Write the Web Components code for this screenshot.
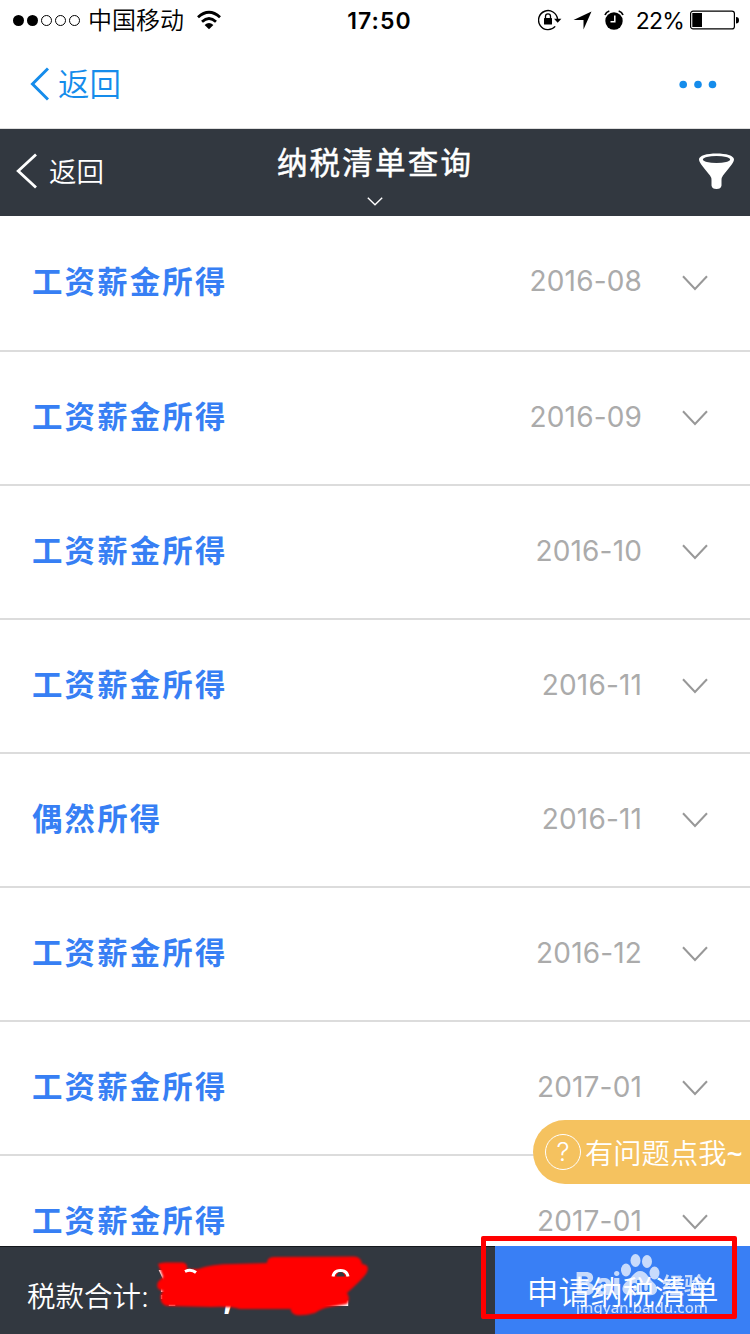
<!DOCTYPE html>
<html lang="zh-CN">
  <head>
    <meta charset="utf-8" />
    <meta name="viewport" content="width=device-width, initial-scale=1.0" />
    <title>纳税清单查询</title>
    <style>
      body {
        margin: 0;
        background: #fff;
        font-family: Inter, "Noto Sans CJK SC", sans-serif;
      }
    </style>
  </head>
  <body>
    <tax-app></tax-app>

    <script>
      function define(name, html) {
        const template = document.createElement("template");
        template.innerHTML = html;
        class Element extends HTMLElement {
          constructor() {
            super();
            this.attachShadow({ mode: "open" });
            this.shadowRoot.appendChild(template.content.cloneNode(true));
          }
        }
        window.customElements.define(name, Element);
      }

      define("status-bar", `
<style>
  :host { display: grid; grid-template-columns: 1fr auto 1fr; align-items: center; height: 40px; padding: 0 11px 0 13px; color: #000; }
  .side { display: flex; align-items: center; }
  .end { justify-content: flex-end; }
  .carrier { font-size: 24px; line-height: 36px; margin: 2px 12px 0 7px; font-weight: 350; }
  .time { font-size: 23px; font-weight: 600; letter-spacing: 1.1px; line-height: 36px; margin: 2px 0 0 7px; }
  .percent { font-size: 23px; letter-spacing: -0.8px; line-height: 36px; margin: 2px 6px 0 12px; }
  svg { display: block; flex: none; }
</style>
<div class="side">
  <svg width="68" height="14" viewBox="0 0 68 14">
    <circle cx="5.5" cy="7.5" r="5.5" /><circle cx="19.5" cy="7.5" r="5.5" />
    <g fill="none" stroke="#000"><circle cx="33.5" cy="7.5" r="5" /><circle cx="47.5" cy="7.5" r="5" /><circle cx="61.5" cy="7.5" r="5" /></g>
  </svg>
  <span class="carrier">中国移动</span>
  <svg width="26" height="20" viewBox="0 0 26 20">
    <path d="M2 7.2Q13-2.8 24 7.2M6 11.7Q13 5.3 20 11.7" fill="none" stroke="#000" stroke-width="2.8" />
    <path d="M8.6 15Q13 11 17.4 15L13 19.2Z" />
  </svg>
</div>
<span class="time">17:50</span>
<div class="side end">
  <svg width="24" height="22" viewBox="0 0 24 22">
    <path d="M17.2 17.4A9.5 9.5 0 1 1 19.5 10" fill="none" stroke="#000" stroke-width="1.4" />
    <path d="M16 9.7h7.4L19.7 13.8Z" /><rect x="6" y="9" width="8" height="6.6" rx=".5" />
    <path d="M7.5 9.5V7.3a2.5 2.5 0 0 1 5 0v2.2" fill="none" stroke="#000" stroke-width="1.3" />
  </svg>
  <svg width="19" height="19" viewBox="0 0 19 19" style="margin-left:11px"><path d="M18.5.5L10.5 18.5V8.9H.5Z" /></svg>
  <svg width="20" height="22" viewBox="0 0 20 22" style="margin-left:12px">
    <circle cx="10" cy="12" r="8.7" /><path d="M1 6Q2 3 5.3 2M14.7 2Q18 3 19 6" fill="none" stroke="#000" stroke-width="1.7" />
    <path d="M10.8 6.5v6.2H6.5" fill="none" stroke="#fff" stroke-width="1.5" />
  </svg>
  <span class="percent">22%</span>
  <svg width="49" height="20" viewBox="0 0 49 20">
    <rect x=".6" y="1.1" width="43.8" height="17.8" rx="2.5" fill="none" stroke="#000" stroke-width="1.2" />
    <path d="M2.3 3h9.7v14H2.3zM46 7q3 0 3 3.2t-3 3.2z" />
  </svg>
</div>
`);

      define("web-nav", `
<style>
  :host { display: flex; align-items: center; justify-content: space-between; box-sizing: border-box; height: 89px; padding: 0 33px 0 30px; color: #158ceb; border-bottom: 1px solid #dedede; }
  .back { display: flex; align-items: center; gap: 9px; font-size: 31.5px; font-weight: 350; line-height: 60px; }
  .back span { margin-top: 2px; }
  svg { display: block; }
</style>
<div class="back">
  <svg width="19" height="34" viewBox="0 0 19 34"><path d="M18 1.5L2.5 17L18 32.5" fill="none" stroke="currentColor" stroke-width="3" /></svg>
  <span>返回</span>
</div>
<svg width="38" height="9" viewBox="0 0 38 9" fill="currentColor"><circle cx="4.2" cy="4.5" r="3.8" /><circle cx="19" cy="4.5" r="3.8" /><circle cx="33.5" cy="4.5" r="3.8" /></svg>
`);

      define("page-header", `
<style>
  :host { display: grid; grid-template-columns: 1fr auto 1fr; box-sizing: border-box; height: 87px; padding: 0 16px; color: #fff; background: #323840; }
  .back { display: flex; align-items: center; gap: 11px; font-size: 27.5px; font-weight: 350; line-height: 60px; margin-bottom: 3px; }
  .back span { margin-top: 2px; }
  .title { display: flex; flex-direction: column; align-items: center; font-size: 30.5px; font-weight: 400; letter-spacing: 2.2px; -webkit-text-stroke: 0.5px #fff; }
  .title span { line-height: 68px; }
  .filter { justify-self: end; margin-top: 24px; }
  svg { display: block; }
</style>
<div class="back">
  <svg width="22" height="36" viewBox="0 0 22 36"><path d="M20 1.5L2.2 18L20 34.5" fill="none" stroke="#fff" stroke-width="2.8" /></svg>
  <span>返回</span>
</div>
<div class="title">
  <span><slot></slot></span>
  <svg width="16" height="9" viewBox="0 0 16 9"><path d="M.8.8L8 7.8L15.2.8" fill="none" stroke="#fff" stroke-width="1.4" /></svg>
</div>
<svg class="filter" width="35" height="36" viewBox="0 0 35 36">
  <path d="M0 6.5C0 2.5 8 .5 17.5.5S35 2.5 35 6.5C35 10 28 17 24 22.5Q22.5 24.5 22.5 27V32.5Q22 36 17.5 36T12.5 32.5V27Q12.5 24.5 11 22.5C7 17 0 10 0 6.5Z" fill="#fff" />
  <ellipse cx="17.5" cy="6.5" rx="13.6" ry="3.5" fill="#323840" />
</svg>
`);

      define("tax-row", `
<style>
  :host { display: flex; align-items: center; box-sizing: border-box; height: 134px; flex: none; padding: 0 42px 0 32px; border-bottom: 2px solid #dcdcdc; }
  .name { flex: 1; color: #377ff4; font-size: 30.4px; font-weight: 700; letter-spacing: 2.2px; line-height: 44px; margin-bottom: 2px; }
  .date { color: #ababab; font-size: 28px; letter-spacing: 0.15px; line-height: 44px; margin-bottom: 3px; }
  svg { display: block; margin-left: 40px; }
</style>
<span class="name"><slot></slot></span>
<span class="date"><slot name="date"></slot></span>
<svg width="26" height="16" viewBox="0 0 26 16"><path d="M1 1.3L13 14L25 1.3" fill="none" stroke="#989898" stroke-width="2" /></svg>
`);

      define("help-button", `
<style>
  :host { display: flex; align-items: center; box-sizing: border-box; width: 217px; height: 64px; padding: 0 0 1px 12px; gap: 4px; border-radius: 32px 0 0 32px; background: #f5c25f; color: #fff; font-size: 28.3px; font-weight: 350; white-space: nowrap; }
  .mark { display: flex; align-items: center; justify-content: center; box-sizing: border-box; width: 36px; height: 36px; border: 1.5px solid #fff; border-radius: 50%; font-size: 26px; font-weight: 300; flex: none; }
  ::slotted(b) { font-family: "Noto Sans", sans-serif; font-weight: 500; }
</style>
<span class="mark">?</span><span><slot></slot></span>
`);

      define("total-bar", `
<style>
  :host { display: flex; box-sizing: border-box; height: 88px; background: #323840; color: #fff; }
  .total { position: relative; flex: 1; box-sizing: border-box; padding: 8px 0 0 27px; border-top: 1px solid #15181c; font-size: 28.5px; font-weight: 350; line-height: 84px; }
  .amount { position: absolute; left: 155px; top: 4px; }
  .apply { position: relative; display: flex; align-items: center; justify-content: center; box-sizing: border-box; width: 255px; padding-bottom: 1px; background: #397ff5; font-size: 32px; font-weight: 350; }
  .apply span { position: relative; }
  .watermark { position: absolute; left: 75px; top: 4px; opacity: .72; }
</style>
<div class="total">税款合计:
  <svg class="amount" width="220" height="80" viewBox="155 1251 220 80">
    <g fill="#fff" font-family="Inter, sans-serif" font-weight="600">
      <text x="158" y="1306" font-size="50" textLength="30">¥</text>
      <text x="222" y="1306" font-size="42">,</text>
      <text x="320" y="1305.5" font-size="50" textLength="28">2</text>
    </g>
    <path d="M158 1264Q161 1262 168 1262.5H183Q188 1264 187 1269L198 1269Q212 1264 233 1264L267 1263Q267 1257 274 1257L353 1256.5Q361 1256 362 1264Q370 1265 367 1272Q365 1277 347 1293Q351 1299 347 1304L330 1307Q322 1308 315 1313Q304 1316 296 1315Q290 1313 291 1309L240 1309Q230 1306 211 1307L167 1306Q159 1304 161 1294L163 1291Q155 1289 158 1282L163 1277Z" fill="#f00" style="filter: blur(0.8px)" />
    <path d="M185 1271.5Q191 1268.5 196 1272.5M333 1276.5Q334 1270.5 340.5 1270.5T348 1276.5" fill="none" stroke="#fff" stroke-width="3" />
    <path d="M336 1276.5Q337 1272 340.5 1272T345 1276.5Z" fill="#323840" />
  </svg>
</div>
<div class="apply">
  <svg class="watermark" width="140" height="76" viewBox="570 1250 140 76" fill="#fff">
    <text x="575" y="1295" font-family="Inter, sans-serif" font-weight="800" font-size="31" textLength="46" lengthAdjust="spacingAndGlyphs">Bai</text>
    <ellipse cx="626" cy="1270" rx="5" ry="6.5" /><ellipse cx="635.5" cy="1260.5" rx="5" ry="6.5" />
    <ellipse cx="647" cy="1261.5" rx="5" ry="6.5" /><ellipse cx="654.5" cy="1273" rx="5" ry="6.5" />
    <path d="M640 1271C634 1271 632 1278 626 1282C618 1290 625 1297 634 1295H647C657 1297 660 1289 654 1283C648 1278 647 1271 640 1271Z" />
    <text x="630" y="1293" font-family="Inter, sans-serif" font-weight="700" font-size="17" fill="#397ff5">du</text>
    <text x="662" y="1293" font-family="Noto Sans CJK SC, sans-serif" font-weight="700" font-size="22">经验</text>
    <text x="576" y="1313" font-family="Noto Sans, sans-serif" font-weight="500" font-size="14.5" textLength="132" lengthAdjust="spacingAndGlyphs">jingyan.baidu.com</text>
  </svg>
  <span>申请纳税清单</span>
</div>
`);

      define("tax-app", `
<style>
  :host { display: flex; flex-direction: column; position: relative; width: 750px; height: 1334px; overflow: hidden; }
  .list { flex: 1; min-height: 0; display: flex; flex-direction: column; overflow: hidden; }
  .list tax-row:first-child { height: 136px; padding-bottom: 1px; }
  help-button { position: absolute; right: 0; top: 1120px; }
  .highlight { position: absolute; left: 481px; top: 1236px; box-sizing: border-box; width: 256px; height: 83px; border: 5px solid #f00; border-radius: 2px; }
</style>
<status-bar></status-bar>
<web-nav></web-nav>
<page-header>纳税清单查询</page-header>
<div class="list">
  <tax-row>工资薪金所得<span slot="date">2016-08</span></tax-row>
  <tax-row>工资薪金所得<span slot="date">2016-09</span></tax-row>
  <tax-row>工资薪金所得<span slot="date">2016-10</span></tax-row>
  <tax-row>工资薪金所得<span slot="date">2016-11</span></tax-row>
  <tax-row>偶然所得<span slot="date">2016-11</span></tax-row>
  <tax-row>工资薪金所得<span slot="date">2016-12</span></tax-row>
  <tax-row>工资薪金所得<span slot="date">2017-01</span></tax-row>
  <tax-row>工资薪金所得<span slot="date">2017-01</span></tax-row>
</div>
<total-bar></total-bar>
<help-button>有问题点我<b>~</b></help-button>
<div class="highlight"></div>
`);
    </script>
  </body>
</html>
